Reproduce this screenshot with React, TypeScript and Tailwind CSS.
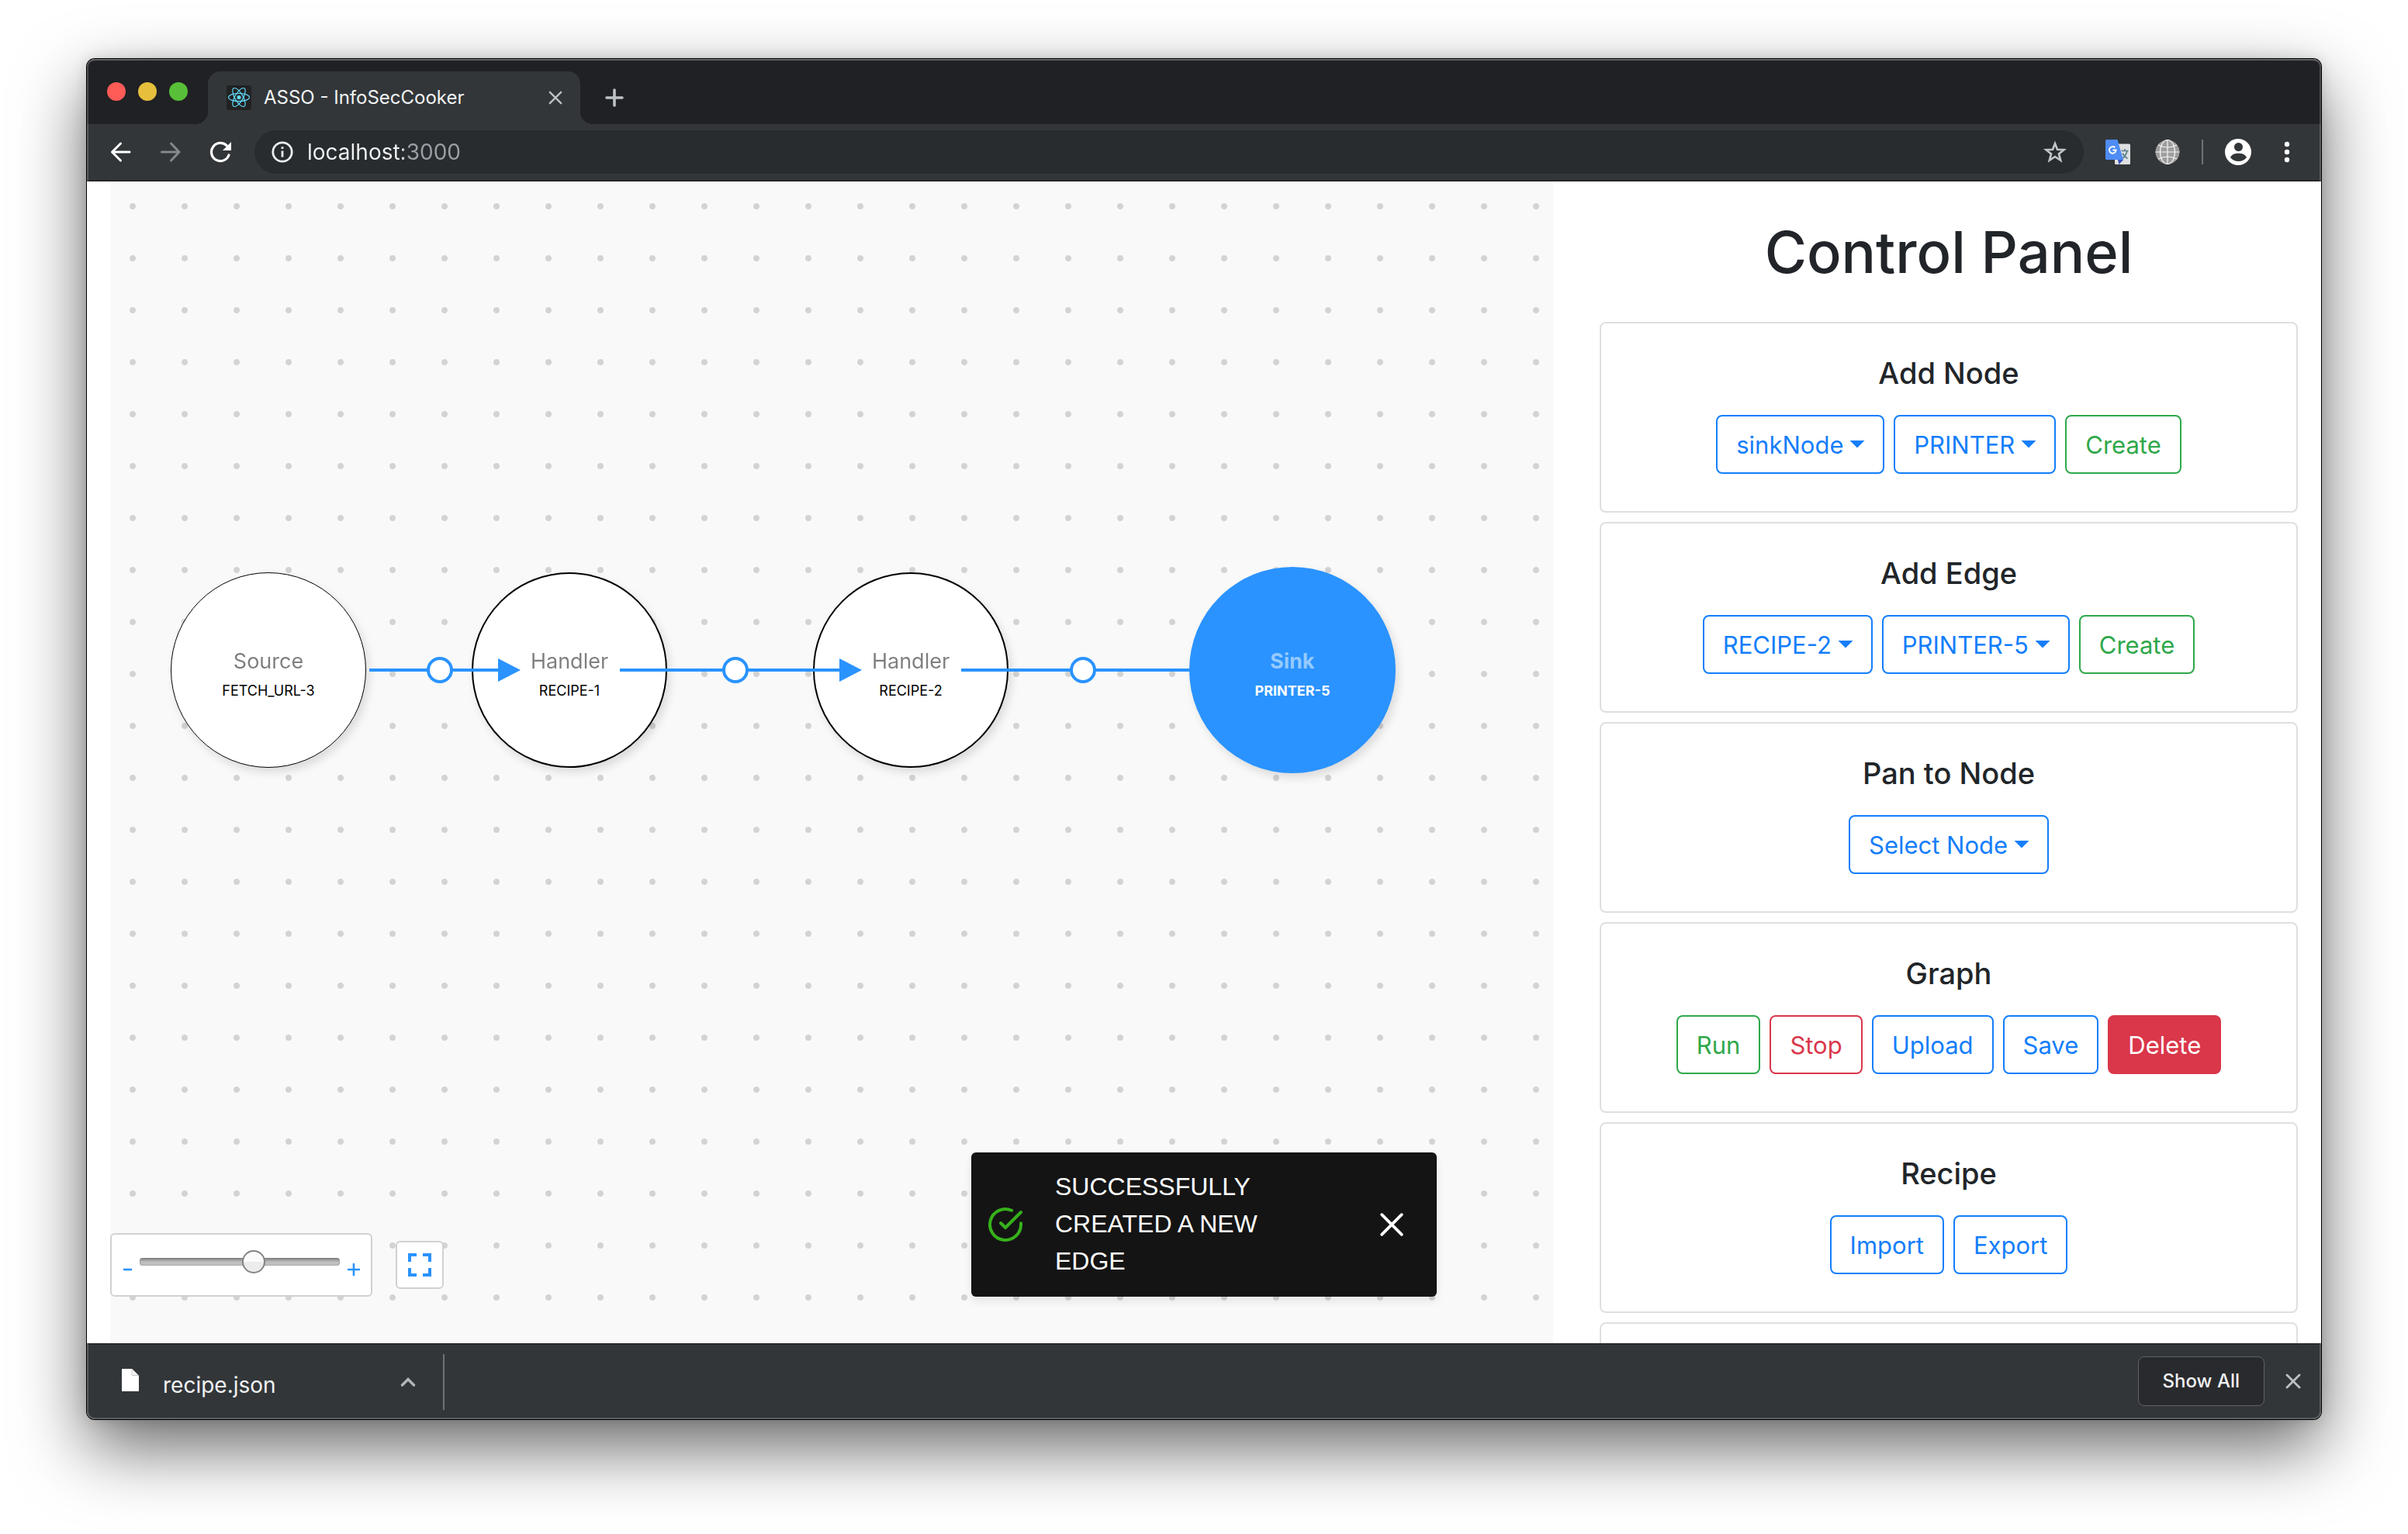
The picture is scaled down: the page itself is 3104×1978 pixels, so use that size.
import { useState, type ReactNode } from "react";

type Tone = "blue" | "green" | "red" | "danger";

const tones: Record<Tone, string> = {
  blue: "border-[#147efb] text-[#147efb]",
  green: "border-[#2fa84a] text-[#2fa84a]",
  red: "border-[#da374a] text-[#da374a]",
  danger: "border-[#da374a] bg-[#da374a] text-white",
};

function ActionButton({ tone, children }: { tone: Tone; children: ReactNode }) {
  return (
    <button type="button" className={`h-[76px] rounded-lg border-2 px-[24px] pt-[2px] text-[31px] leading-[48px] ${tones[tone]}`}>
      {children}
    </button>
  );
}

function Dropdown({ label, value }: { label: string; value: string }) {
  return (
    <span className="relative inline-flex">
      <select
        aria-label={label}
        className="h-[76px] appearance-none rounded-lg border-2 border-[#147efb] bg-white pt-[2px] pr-[50px] pl-[24px] text-[31px] leading-[48px] text-[#147efb]"
      >
        <option>{value}</option>
      </select>
      <svg className="pointer-events-none absolute top-[33px] right-[25px]" width="20" height="10" viewBox="0 0 20 10" aria-hidden="true">
        <path d="M0.500 0H19.500L10 9.500Z" fill="#147efb" />
      </svg>
    </span>
  );
}

function Card({ title, children }: { title?: string; children?: ReactNode }) {
  return (
    <section className="h-[246px] shrink-0 rounded-lg border-2 border-[#dfdfdf] bg-white pt-[40px] text-center">
      {title && <h2 className="text-[38px] leading-[48px] font-medium">{title}</h2>}
      <div className="mt-[30px] flex justify-center gap-[12px]">{children}</div>
    </section>
  );
}

function GraphNode({ kind, name, className }: { kind: string; name: string; className: string }) {
  return (
    <div className={`absolute flex flex-col items-center gap-2 rounded-full shadow-[4px_6px_12px_rgba(0,0,0,0.12)] ${className}`}>
      <span className="text-[27px] leading-[36px] opacity-50">{kind}</span>
      <span className="text-[18px] leading-[24px]">{name}</span>
    </div>
  );
}

function Edges() {
  const arrow = (x: number) => <path d={`M${x} 615V645L${x + 29} 630Z`} fill="#2a93ff" />;
  const handle = (x: number) => <circle cx={x} cy="630" r="15" fill="#fff" stroke="#2a93ff" strokeWidth="4" />;
  return (
    <svg className="absolute top-0 left-0" width="1400" height="700" viewBox="0 0 1400 700" aria-hidden="true">
      <path d="M334 630H502M657 630H942M1097 630H1393" stroke="#2a93ff" strokeWidth="4" />
      {arrow(500)}
      {arrow(940)}
      {handle(425)}
      {handle(806)}
      {handle(1254)}
    </svg>
  );
}

function Cross({ size, width, color }: { size: number; width: number; color: string }) {
  return (
    <svg width={size} height={size} viewBox="0 0 20 20" fill="none" stroke={color} strokeWidth={width} strokeLinecap="round" aria-hidden="true">
      <path d="M2 2L18 18M18 2L2 18" />
    </svg>
  );
}

function ReactIcon() {
  return (
    <svg width="32" height="32" viewBox="0 0 32 32" aria-hidden="true">
      <rect width="32" height="32" rx="3" fill="#222" />
      <g fill="none" stroke="#61dafb" strokeWidth="1.2">
        <ellipse cx="16" cy="15.500" rx="13.5" ry="5.2" />
        <ellipse cx="16" cy="15.500" rx="13.5" ry="5.2" transform="rotate(60 16 15.5)" />
        <ellipse cx="16" cy="15.500" rx="13.5" ry="5.2" transform="rotate(120 16 15.5)" />
      </g>
      <circle cx="16" cy="15.500" r="2.6" fill="#61dafb" />
    </svg>
  );
}

function TitleBar() {
  return (
    <header className="flex h-[84px] shrink-0 items-end bg-[#202124]">
      <div className="mb-[30px] ml-[26px] flex gap-[16px]">
        <button type="button" aria-label="Close window" className="size-[24px] rounded-full bg-[#ff5b57]" />
        <button type="button" aria-label="Minimize window" className="size-[24px] rounded-full bg-[#e6bf3c]" />
        <button type="button" aria-label="Zoom window" className="size-[24px] rounded-full bg-[#57c038]" />
      </div>
      <div className="ml-[10px] flex items-end">
        <div className="size-[16px] bg-[radial-gradient(circle_at_0_0,transparent_16px,#323639_16px)]" />
        <div className="flex h-[68px] w-[480px] items-center rounded-t-[16px] bg-[#323639] pr-[20px] pl-[24px]">
          <ReactIcon />
          <span className="ml-[16px] text-[24px] leading-[32px] text-[#f1f3f4]">ASSO - InfoSecCooker</span>
          <button type="button" aria-label="Close tab" className="ml-auto flex size-[24px] items-center justify-center">
            <Cross size={18} width={2.6} color="#bdc1c6" />
          </button>
        </div>
        <div className="size-[16px] bg-[radial-gradient(circle_at_100%_0,transparent_16px,#323639_16px)]" />
      </div>
      <button type="button" aria-label="New tab" className="mb-[22px] ml-[16px]">
        <svg width="24" height="24" viewBox="0 0 24 24" stroke="#bdc1c6" strokeWidth="3.6" strokeLinecap="round" aria-hidden="true">
          <path d="M12 2V22M2 12H22" />
        </svg>
      </button>
    </header>
  );
}

function TranslateIcon() {
  return (
    <svg width="32" height="32" viewBox="0 0 32 32" aria-hidden="true">
      <rect x="12" y="5.500" width="20" height="26.500" rx="1.500" fill="#dfe0e1" />
      <path d="M20.500 14.500H29.500M25 12V14.500M28 14.500C27 19 24.500 22.500 21 25M22 17.500C23.500 20.500 26 23 28.500 24.500" fill="none" stroke="#5b7f8c" strokeWidth="1.700" />
      <path d="M16 26L23 26L17.500 32Z" fill="#3450c0" />
      <path d="M1.500 0H15.500L23 26H1.500A1.500 1.500 0 0 1 0 24.500V1.500A1.500 1.500 0 0 1 1.500 0Z" fill="#4f8cf5" />
      <path d="M12.300 10.300A4.300 4.300 0 1 0 13.600 13.500H9.500" fill="none" stroke="#fff" strokeWidth="1.900" />
    </svg>
  );
}

function Toolbar() {
  return (
    <nav className="flex h-[74px] shrink-0 items-center border-b-2 border-[#272527] bg-[#323639] pr-[32px] pl-[30px]">
      <div className="flex gap-[36px]">
        <button type="button" aria-label="Back">
          <svg width="28" height="28" viewBox="0 0 28 28" fill="none" stroke="#fff" strokeWidth="3" strokeLinecap="round" strokeLinejoin="round" aria-hidden="true">
            <path d="M25 14H2.500M13.500 3L2.500 14L13.500 25" />
          </svg>
        </button>
        <button type="button" aria-label="Forward">
          <svg width="28" height="28" viewBox="0 0 28 28" fill="none" stroke="#85888a" strokeWidth="3" strokeLinecap="round" strokeLinejoin="round" aria-hidden="true">
            <path d="M2.500 14H25M14.500 3L25 14L14.500 25" />
          </svg>
        </button>
        <button type="button" aria-label="Reload">
          <svg width="28" height="28" viewBox="0 0 28 28" aria-hidden="true">
            <path d="M25 18A11.600 11.600 0 1 1 22.500 6" fill="none" stroke="#fff" strokeWidth="3.200" strokeLinecap="round" />
            <path d="M28 1V12H17Z" fill="#fff" />
          </svg>
        </button>
      </div>
      <div className="ml-[30px] flex h-[56px] min-w-0 flex-1 items-center rounded-full bg-[#282c2f] pr-[22px] pl-[22px]">
        <svg width="28" height="28" viewBox="0 0 28 28" fill="none" stroke="#eceef0" strokeWidth="2.800" aria-hidden="true">
          <circle cx="14" cy="14" r="12.200" />
          <path d="M14 12.500V20.500M14 7.200V10" />
        </svg>
        <input
          aria-label="Address"
          defaultValue="localhost:3000"
          className="ml-[18px] h-[40px] min-w-0 flex-1 bg-[linear-gradient(90deg,#f1f3f4_124px,#9aa0a6_124px)] bg-clip-text text-[28px] text-transparent outline-none"
        />
        <button type="button" aria-label="Bookmark this page">
          <svg width="30" height="30" viewBox="0 0 30 30" fill="none" stroke="#c3c6c9" strokeWidth="2.600" aria-hidden="true">
            <path d="M15 4L18 11.800L26.500 12.200L19.900 17.400L22.200 25.800L15 21L7.800 25.800L10.100 17.400L3.500 12.200L12 11.800Z" />
          </svg>
        </button>
      </div>
      <div className="ml-[28px] flex items-center gap-[28px]">
        <button type="button" aria-label="Translate">
          <TranslateIcon />
        </button>
        <button type="button" aria-label="Network extension" className="ml-[4px]">
          <svg width="32" height="32" viewBox="0 0 32 32" aria-hidden="true">
            <circle cx="16" cy="16" r="15.500" fill="#9e9e9e" />
            <g fill="none" stroke="#f5f5f5" strokeWidth="1.200">
              <path d="M16 0.500V31.500M0.500 16H31.500M4 7Q16 13 28 7M4 25Q16 19 28 25" />
              <ellipse cx="16" cy="16" rx="9.500" ry="15.500" />
            </g>
          </svg>
        </button>
        <div className="h-[32px] w-[2px] bg-[#6f7274]" />
        <button type="button" aria-label="Profile">
          <svg width="34" height="34" viewBox="0 0 34 34" aria-hidden="true">
            <circle cx="17" cy="17" r="17" fill="#fff" />
            <circle cx="17.500" cy="10.500" r="5.500" fill="#323639" />
            <path d="M7 24C9 20 13 18.800 17.500 18.800S26 20 28 24C25.500 27.500 21.500 29 17.500 29S9.500 27.500 7 24Z" fill="#323639" />
          </svg>
        </button>
        <button type="button" aria-label="Menu" className="ml-[6px]">
          <svg width="24" height="28" viewBox="0 0 24 28" fill="#fff" aria-hidden="true">
            <circle cx="12" cy="4" r="3.200" />
            <circle cx="12" cy="14" r="3.200" />
            <circle cx="12" cy="24" r="3.200" />
          </svg>
        </button>
      </div>
    </nav>
  );
}

function ZoomControls() {
  const [zoom, setZoom] = useState(58);
  return (
    <div className="absolute bottom-[60px] left-0 flex items-center gap-[30px]">
      <div className="flex h-[82px] w-[338px] items-center rounded-md border-2 border-[#d1d1d1] bg-white px-[14px] text-[#2a93ff]">
        <button type="button" aria-label="Zoom out" className="mt-[12px] flex w-[14px] justify-center">
          <svg width="12" height="16" viewBox="0 0 12 16" aria-hidden="true">
            <path d="M0 8H11" stroke="currentColor" strokeWidth="2.600" />
          </svg>
        </button>
        <input
          type="range"
          aria-label="Zoom"
          value={zoom}
          onChange={(e) => setZoom(Number(e.target.value))}
          className="mr-[10px] mb-[8px] ml-[8px] h-[30px] min-w-0 flex-1 appearance-none bg-transparent [&::-webkit-slider-runnable-track]:h-[10px] [&::-webkit-slider-runnable-track]:rounded-[4px] [&::-webkit-slider-runnable-track]:bg-[linear-gradient(#7c7c7c,#bdbdbd_50%,#c4c4c4)] [&::-webkit-slider-runnable-track]:shadow-[inset_0_0_2px_#777] [&::-webkit-slider-thumb]:-mt-[10px] [&::-webkit-slider-thumb]:size-[30px] [&::-webkit-slider-thumb]:appearance-none [&::-webkit-slider-thumb]:rounded-full [&::-webkit-slider-thumb]:border-2 [&::-webkit-slider-thumb]:border-[#858585] [&::-webkit-slider-thumb]:bg-[linear-gradient(#fbfbfb_50%,#ececec_50%)]"
        />
        <button type="button" aria-label="Zoom in" className="mt-[12px]">
          <svg width="16" height="16" viewBox="0 0 16 16" aria-hidden="true">
            <path d="M0 8H16M8 0V16" stroke="currentColor" strokeWidth="2.600" />
          </svg>
        </button>
      </div>
      <button type="button" aria-label="Fit to view" className="flex size-[62px] items-center justify-center rounded-md border-2 border-[#d1d1d1] bg-white">
        <svg width="30" height="30" viewBox="0 0 30 30" fill="none" stroke="#2a93ff" strokeWidth="4" aria-hidden="true">
          <path d="M2 11V2H11M19 2H28V11M28 19V28H19M11 28H2V19" />
        </svg>
      </button>
    </div>
  );
}

function Toast() {
  return (
    <div
      role="status"
      className="absolute bottom-[60px] left-1/2 flex w-[600px] -translate-x-1/2 items-center rounded-[6px] bg-[#141414] py-[20px] pr-[36px] pl-[20px] font-['Liberation_Sans',Arial,sans-serif] text-[32px] leading-[48px] text-white shadow-[0_6px_12px_rgba(0,0,0,0.08)]"
    >
      <svg width="48" height="48" viewBox="0 0 24 24" fill="none" stroke="#37b11b" strokeWidth="2" strokeLinecap="round" strokeLinejoin="round" aria-hidden="true">
        <path d="M22 11.080V12a10 10 0 1 1-5.930-9.140" />
        <path d="M22 4L12 14.010L9 11.010" />
      </svg>
      <p className="mb-[2px] ml-[40px] w-[300px]">SUCCESSFULLY CREATED A NEW EDGE</p>
      <button type="button" aria-label="Dismiss" className="ml-auto p-[6px]">
        <Cross size={32} width={2.4} color="#fff" />
      </button>
    </div>
  );
}

function DownloadBar() {
  return (
    <footer className="flex shrink-0 border-t-2 border-[#28292b] bg-[#323639]">
      <div className="my-[12px] flex h-[72px] w-[461px] items-center border-r-2 border-[#6f7274] pr-[35px] pl-[44px]">
        <svg className="mb-[4px]" width="24" height="30" viewBox="0 0 24 30" aria-hidden="true">
          <path d="M1 0H14L23 9V29H1Z" fill="#fff" />
          <path d="M14 0V8.500H22.500" fill="#f4f4f4" stroke="#c9c9c9" strokeWidth="1" />
        </svg>
        <span className="mt-[8px] ml-[30px] text-[28px] leading-[36px] text-[#f1f3f4]">recipe.json</span>
        <button type="button" aria-label="Download options" className="ml-auto">
          <svg width="20" height="14" viewBox="0 0 20 14" fill="none" stroke="#b4b7ba" strokeWidth="3.400" strokeLinecap="round" aria-hidden="true">
            <path d="M2.500 11L10 3.500L17.500 11" />
          </svg>
        </button>
      </div>
      <div className="mb-[2px] ml-auto flex items-center gap-[27px] pr-[26px]">
        <button type="button" className="h-[64px] rounded-[8px] border border-[#5f6368] bg-[#292a2d] px-[31px] text-[24px] font-medium text-[#f1f3f4]">
          Show All
        </button>
        <button type="button" aria-label="Close downloads">
          <Cross size={20} width={2.8} color="#bdc1c6" />
        </button>
      </div>
    </footer>
  );
}

export default function App() {
  return (
    <div className="flex h-screen flex-col bg-white px-[112px] pt-[76px] pb-[148px] font-[Inter,sans-serif] text-[#212529]">
      <div className="relative flex min-h-0 flex-1 flex-col overflow-hidden rounded-[10px] shadow-[0_0_0_1px_#000,0_36px_90px_rgba(0,0,0,0.6),0_0_20px_rgba(0,0,0,0.15)]">
        <TitleBar />
        <Toolbar />
        <main className="relative grid min-h-0 flex-1 grid-cols-3 overflow-hidden bg-white">
          <div className="col-span-2 min-h-0 px-[30px]">
            <div className="relative h-full overflow-hidden bg-[#f9f9f9] bg-[radial-gradient(circle_at_29px_32px,#d3d3d3_3.5px,transparent_4.5px)] bg-[size:67px_67px] text-black">
              <GraphNode kind="Source" name="FETCH_URL-3" className="top-[504px] left-[78px] size-[252px] border border-black bg-white pt-[96px]" />
              <GraphNode kind="Handler" name="RECIPE-1" className="top-[504px] left-[466px] size-[252px] border-2 border-black bg-white pt-[95px]" />
              <GraphNode kind="Handler" name="RECIPE-2" className="top-[504px] left-[906px] size-[252px] border-2 border-black bg-white pt-[95px]" />
              <GraphNode kind="Sink" name="PRINTER-5" className="top-[497px] left-[1391px] size-[266px] bg-[#2a93ff] pt-[104px] font-bold text-white" />
              <Edges />
              <ZoomControls />
            </div>
          </div>
          <aside className="flex min-h-0 flex-col gap-[12px] overflow-hidden px-[30px]">
            <h1 className="mt-[43px] mb-[30px] text-center text-[74px] leading-[96px] font-medium">Control Panel</h1>
            <Card title="Add Node">
              <Dropdown label="Node kind" value="sinkNode" />
              <Dropdown label="Node type" value="PRINTER" />
              <ActionButton tone="green">Create</ActionButton>
            </Card>
            <Card title="Add Edge">
              <Dropdown label="Edge source" value="RECIPE-2" />
              <Dropdown label="Edge target" value="PRINTER-5" />
              <ActionButton tone="green">Create</ActionButton>
            </Card>
            <Card title="Pan to Node">
              <Dropdown label="Node" value="Select Node" />
            </Card>
            <Card title="Graph">
              <ActionButton tone="green">Run</ActionButton>
              <ActionButton tone="red">Stop</ActionButton>
              <ActionButton tone="blue">Upload</ActionButton>
              <ActionButton tone="blue">Save</ActionButton>
              <ActionButton tone="danger">Delete</ActionButton>
            </Card>
            <Card title="Recipe">
              <ActionButton tone="blue">Import</ActionButton>
              <ActionButton tone="blue">Export</ActionButton>
            </Card>
            <Card />
          </aside>
          <Toast />
        </main>
        <DownloadBar />
        <div className="pointer-events-none absolute inset-0 rounded-[10px] border-2 border-white/20 border-t-white/30" />
      </div>
    </div>
  );
}
